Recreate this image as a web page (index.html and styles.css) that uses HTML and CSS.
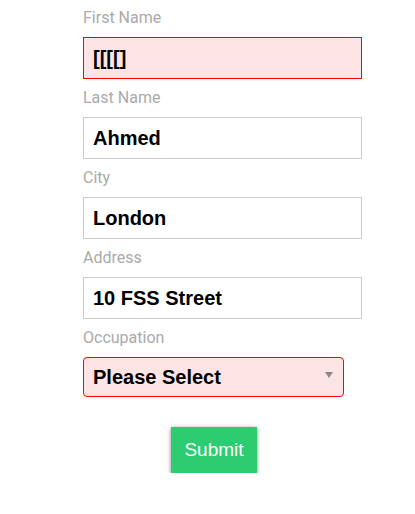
FILE: index.html
```html
<!DOCTYPE html>
<html>
<head>
<meta charset="utf-8">
<link rel="stylesheet" href="styles.css">
</head>
<body>
<form class="form">
  <label class="label">First Name</label>
  <div class="input invalid">[[[[]</div>
  <label class="label">Last Name</label>
  <div class="input">Ahmed</div>
  <label class="label">City</label>
  <div class="input">London</div>
  <label class="label">Address</label>
  <div class="input">10 FSS Street</div>
  <label class="label">Occupation</label>
  <div class="select">
    <span>Please Select</span>
    <span class="arrow"></span>
  </div>
  <div class="actions">
    <button type="button" class="submit">Submit</button>
  </div>
</form>
</body>
</html>
```
FILE: styles.css
```css
html, body {
  margin: 0;
  padding: 0;
  background: #fff;
}
body {
  padding-top: 8px;
}
.form {
  margin-left: 83px;
  width: 279px;
  display: flex;
  flex-direction: column;
}
.label {
  font-family: Roboto, "Liberation Sans", sans-serif;
  font-size: 16px;
  line-height: 20px;
  color: #aaaaaa;
  margin-bottom: 9px;
}
.input {
  box-sizing: border-box;
  height: 42px;
  border: 1px solid #cccccc;
  padding: 1px 9px 0;
  display: flex;
  align-items: center;
  font-family: "Liberation Sans", Arial, sans-serif;
  font-weight: bold;
  font-size: 20px;
  color: #000;
  margin-bottom: 9px;
}
.input.invalid {
  border-color: #ff0000;
  background: #fce4e4;
}
.select {
  box-sizing: border-box;
  width: 261px;
  height: 40px;
  border: 1px solid #ff0000;
  border-radius: 4px;
  background: #fce4e4;
  padding: 1px 9px 0;
  display: flex;
  align-items: center;
  justify-content: space-between;
  font-family: "Liberation Sans", Arial, sans-serif;
  font-weight: bold;
  font-size: 20px;
  color: #000;
}
.arrow {
  width: 0;
  height: 0;
  border-left: 4.5px solid transparent;
  border-right: 4.5px solid transparent;
  border-top: 6px solid #888;
  margin-right: 1px;
  margin-top: -5px;
}
.actions {
  margin-top: 30px;
  padding-left: 88px;
}
.submit {
  width: 86px;
  height: 46px;
  border: none;
  background: #2ecc71;
  color: #fff;
  font-family: "Liberation Sans", Arial, sans-serif;
  font-size: 19px;
  box-shadow: 0 1px 4px rgba(0, 0, 0, 0.5);
  padding: 0;
}
```
